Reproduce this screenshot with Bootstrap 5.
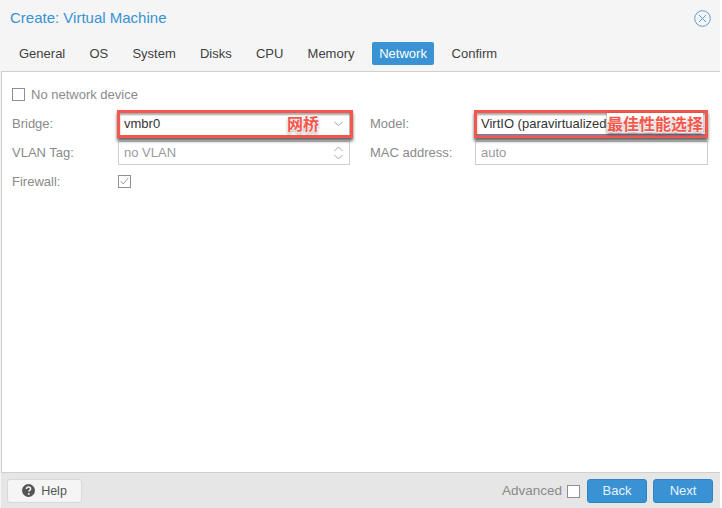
<!DOCTYPE html>
<html lang="en">
<head>
<meta charset="utf-8">
<title>Create: Virtual Machine</title>
<link href="https://cdn.jsdelivr.net/npm/bootstrap@5.3.0/dist/css/bootstrap.min.css" rel="stylesheet">
<style>
html,body{height:100%;margin:0;background:#fff;overflow:hidden}
body{font-family:"Liberation Sans",Arial,sans-serif;font-size:13px;color:#444}
.vm-window{width:720px;height:508px;background:#f5f5f5;display:flex;flex-direction:column}
.vm-head{height:41px;padding:0 10px 5px;flex:none}
.vm-title{font-size:15px;color:#3892d4;font-weight:400;margin:0}
.vm-close{width:17px;height:17px;margin-right:-1px}
.vm-tabs{height:30px;padding:0 12px 5px;flex:none}
.vm-tab{padding:0 7px;height:23px;line-height:23px;font-size:13px;color:#3f3f3f;border-radius:2px;margin-right:10.2px}
.vm-tab.vm-on{background:#3892d4;color:#fff;padding:0 7.5px}
.vm-body{flex:1;background:#fff;border:1px solid #cfcfcf;border-right:0;margin-left:1px;padding:8px 10px 0;min-height:0}
.vm-fields{display:grid;grid-template-columns:348px 1fr}
.vm-row{height:29px}
.vm-label{width:106px;color:#8a8a8a;flex:none}
.vm-plain{color:#8a8a8a;margin-left:6px}
.vm-input{height:24px;border:1px solid #cfcfcf;padding:0 5px;line-height:22px;background:#fff;color:#9a9a9a;flex:1;position:relative;min-width:0;white-space:nowrap}
.vm-cell1 .vm-input{max-width:232px}
.vm-cell2{padding-left:10px}
.vm-cell2 .vm-label{width:105px}
.vm-cell2 .vm-input{max-width:233px}
.vm-mark{color:#333;z-index:1}
.vm-blue{border-bottom:2px solid #3892d4}
.vm-box{position:absolute;top:-3px;bottom:-3px;border:3px solid #f4574c;box-shadow:0 3px 3px rgba(0,0,0,.6),inset 0 2px 2px rgba(0,0,0,.35);pointer-events:none}
.vm-box-a{left:-2px;right:-4px}
.vm-box-b{left:-2px;right:-1px}
.vm-blue .vm-box{bottom:-4px}
.vm-note{position:absolute;top:0;color:#f4574c;font-weight:700;font-size:16px;line-height:20px;font-family:"Noto Sans CJK SC","Liberation Sans",sans-serif;text-shadow:0 0 2px #fff,0 0 2px #fff,0 1px 2px #fff,0 2px 3px rgba(0,0,0,.55)}
.vm-note-a{left:168px}
.vm-note-b{left:131px;background:#fff;box-shadow:0 1px 3px rgba(0,0,0,.4)}
.vm-check{width:13px;height:13px;border:1px solid #8f8f8f;background:#fff;display:block;flex:none}
.vm-trig{position:absolute;right:5px;top:3px;width:11px;height:16px}
.vm-foot{height:35px;background:#e6e6e6;padding:0 7px 0 6px;flex:none;margin-left:1px}
.vm-btn{height:24px;padding:0;font-size:13px;line-height:22px;border-radius:3px}
.vm-help{width:75px;background:#f5f5f5;border:1px solid #d8d8d8;color:#555;font-size:12.5px;gap:6px}
.vm-pri{width:60px;background:#3892d4;border:1px solid #2f84c4;color:#e9f3fb}
.vm-adv{color:#8a8a8a;font-size:13.5px;margin-right:5px;margin-top:2px}
.vm-foot .vm-check{margin-right:7px;margin-top:2px}
.vm-next{margin-left:6px}
</style>
</head>
<body>
<div class="vm-window">
  <div class="vm-head d-flex align-items-center justify-content-between">
    <h1 class="vm-title">Create: Virtual Machine</h1>
    <svg class="vm-close" viewBox="0 0 17 17" fill="none" stroke="#5b9bd5" stroke-width="1"><circle cx="8.5" cy="8.5" r="7.8"/><path d="M5 5l7 7M12 5l-7 7"/></svg>
  </div>
  <div class="vm-tabs d-flex align-items-center">
    <span class="vm-tab">General</span><span class="vm-tab">OS</span><span class="vm-tab">System</span><span class="vm-tab">Disks</span><span class="vm-tab">CPU</span><span class="vm-tab">Memory</span><span class="vm-tab vm-on">Network</span><span class="vm-tab">Confirm</span>
  </div>
  <div class="vm-body">
    <div class="d-flex align-items-center vm-row">
      <span class="vm-check"></span><span class="vm-plain text-nowrap">No network device</span>
    </div>
    <div class="vm-fields">
      <div class="vm-cell1 vm-row d-flex align-items-center"><span class="vm-label">Bridge:</span>
        <div class="vm-input vm-mark">vmbr0<span class="vm-box vm-box-a"></span><span class="vm-note vm-note-a">网桥</span>
          <svg class="vm-trig" viewBox="0 0 11 16" fill="none" stroke="#a5a5a5"><path d="M1.5 6l4 3.500 4-3.500"/></svg>
        </div>
      </div>
      <div class="vm-cell2 vm-row d-flex align-items-center"><span class="vm-label">Model:</span>
        <div class="vm-input vm-mark vm-blue">VirtIO (paravirtualized)<span class="vm-box vm-box-b"></span><span class="vm-note vm-note-b">最佳性能选择</span></div>
      </div>
      <div class="vm-cell1 vm-row d-flex align-items-center"><span class="vm-label">VLAN Tag:</span>
        <div class="vm-input">no VLAN
          <svg class="vm-trig" viewBox="0 0 11 16" fill="none" stroke="#a5a5a5"><path d="M1.500 6l4-4 4 4M1.500 10l4 4 4-4"/></svg>
        </div>
      </div>
      <div class="vm-cell2 vm-row d-flex align-items-center"><span class="vm-label">MAC address:</span>
        <div class="vm-input">auto</div>
      </div>
      <div class="vm-cell1 vm-row d-flex align-items-center"><span class="vm-label">Firewall:</span>
        <svg class="vm-check" viewBox="0 0 13 13" fill="none" stroke="#8f8f8f" stroke-width="1"><path d="M2 6l3 3.500L11 2"/></svg>
      </div>
    </div>
  </div>
  <div class="vm-foot d-flex align-items-center">
    <button type="button" class="btn vm-btn vm-help d-flex align-items-center justify-content-center">
      <svg width="13" height="13" viewBox="0 0 13 13"><circle cx="6.5" cy="6.5" r="6.5" fill="#555"/><path d="M4.400 5c.1-1.300 1-1.900 2.100-1.900s2.100.7 2.100 1.800c0 1.500-1.700 1.400-1.700 2.600" fill="none" stroke="#f5f5f5" stroke-width="1.500"/><circle cx="6.800" cy="9.900" r=".95" fill="#f5f5f5"/></svg>Help</button>
    <span class="vm-adv ms-auto">Advanced</span>
    <span class="vm-check"></span>
    <button type="button" class="btn vm-btn vm-pri">Back</button>
    <button type="button" class="btn vm-btn vm-pri vm-next">Next</button>
  </div>
</div>
<script src="https://cdn.jsdelivr.net/npm/bootstrap@5.3.0/dist/js/bootstrap.bundle.min.js"></script>
</body>
</html>
